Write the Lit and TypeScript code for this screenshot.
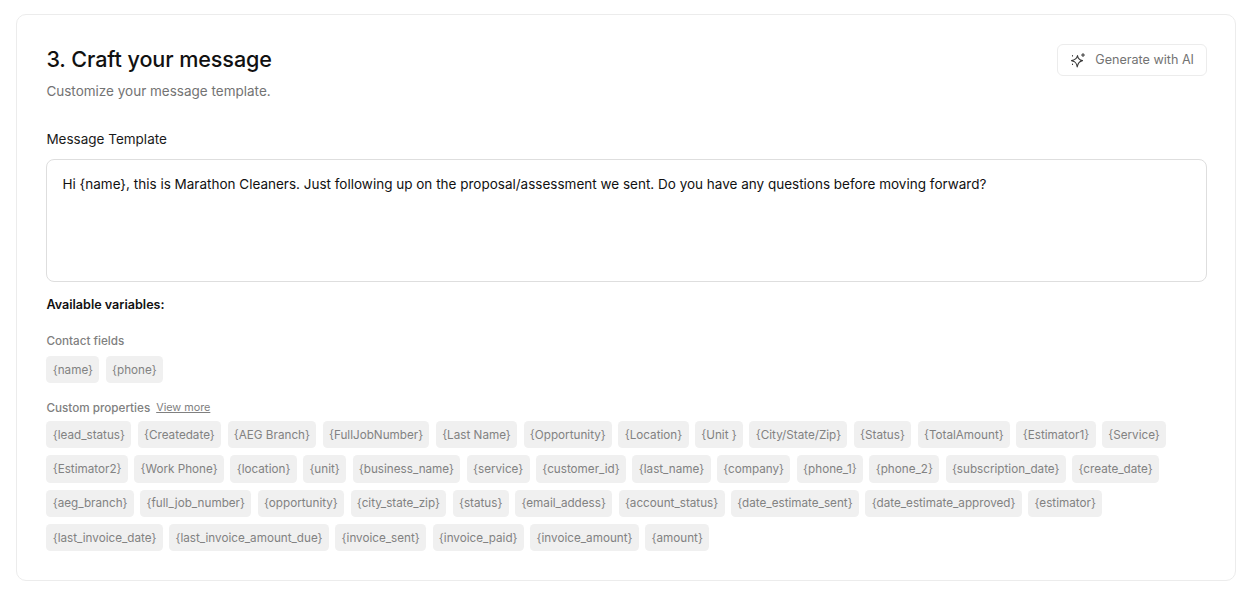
import { LitElement, html, css } from 'lit';
import { customElement } from 'lit/decorators.js';

const CONTACT_FIELDS = ['{name}', '{phone}'];

const CUSTOM_PROPERTIES = [
  '{lead_status}', '{Createdate}', '{AEG Branch}', '{FullJobNumber}', '{Last Name}', '{Opportunity}',
  '{Location}', '{Unit }', '{City/State/Zip}', '{Status}', '{TotalAmount}', '{Estimator1}', '{Service}',
  '{Estimator2}', '{Work Phone}', '{location}', '{unit}', '{business_name}', '{service}', '{customer_id}',
  '{last_name}', '{company}', '{phone_1}', '{phone_2}', '{subscription_date}', '{create_date}',
  '{aeg_branch}', '{full_job_number}', '{opportunity}', '{city_state_zip}', '{status}', '{email_addess}',
  '{account_status}', '{date_estimate_sent}', '{date_estimate_approved}', '{estimator}',
  '{last_invoice_date}', '{last_invoice_amount_due}', '{invoice_sent}', '{invoice_paid}',
  '{invoice_amount}', '{amount}',
];

const MESSAGE =
  'Hi {name}, this is Marathon Cleaners. Just following up on the proposal/assessment we sent. Do you have any questions before moving forward?';

@customElement('app-root')
export class AppRoot extends LitElement {
  static styles = css`
    :host {
      display: block;
      padding: 14px 16px;
      background: #fff;
      font-family: Inter, 'Liberation Sans', sans-serif;
      color: #111;
    }

    .card {
      border: 1px solid #ececec;
      border-radius: 10px;
      padding: 29px 28px 27px 29.4px;
      box-sizing: border-box;
      height: 567px;
    }

    .head {
      display: flex;
      justify-content: space-between;
      align-items: flex-start;
    }

    h2 {
      margin: 0;
      font-size: 21.6px;
      line-height: 30px;
      font-weight: 500;
      letter-spacing: -0.1px;
      color: #111;
    }

    .sub {
      margin: 7px 0 0;
      font-size: 13.5px;
      line-height: 20px;
      color: #737373;
    }

    .ai-btn {
      display: flex;
      align-items: center;
      gap: 9px;
      height: 32px;
      padding: 0 12px 1px;
      box-sizing: border-box;
      border: 1px solid #ececec;
      border-radius: 6px;
      background: #fff;
      color: #737373;
      font: inherit;
      font-size: 12.6px;
    }

    .label {
      margin-top: 28px;
      font-size: 13.5px;
      line-height: 20px;
      color: #1a1a1a;
    }

    .template {
      margin-top: 10px;
      height: 123px;
      box-sizing: border-box;
      border: 1px solid #dedede;
      border-radius: 8px;
      padding: 14px 15px;
      font-size: 13.5px;
      line-height: 20px;
      color: #111;
    }

    .vars-title {
      margin-top: 14px;
      font-size: 12.6px;
      line-height: 18px;
      font-weight: 600;
      color: #111;
    }

    .group-title {
      display: flex;
      align-items: center;
      gap: 6px;
      font-size: 11.7px;
      line-height: 16px;
      font-weight: 500;
      color: #808080;
    }

    .contact { margin-top: 19px; }
    .custom { margin-top: 16.3px; }

    .view-more {
      font-size: 10.8px;
      font-weight: 400;
      color: #808080;
      text-decoration: underline;
    }

    .chips {
      display: flex;
      flex-wrap: wrap;
      gap: 7px 6.4px;
      margin-top: 7px;
    }

    .custom + .chips { margin-top: 5.4px; }

    .chip {
      display: flex;
      align-items: center;
      height: 27.3px;
      padding: 0 6.3px;
      border-radius: 4.5px;
      background: #f0f0f0;
      color: #828282;
      font-size: 11.7px;
      white-space: pre;
    }
  `;

  private chips(items: string[]) {
    return html`<div class="chips">${items.map((v) => html`<span class="chip">${v}</span>`)}</div>`;
  }

  render() {
    return html`
      <div class="card">
        <div class="head">
          <div>
            <h2>3. Craft your message</h2>
            <p class="sub">Customize your message template.</p>
          </div>
          <button class="ai-btn">
            <svg width="16" height="16" viewBox="0 0 16 16" fill="none" stroke="#3a3a3a" stroke-width="1.1" stroke-linecap="round" stroke-linejoin="round">
              <path d="M7.500 3.500C7.900 6.600 9.300 8 12.500 8.600 9.300 9.200 7.900 10.700 7.200 15 6.600 10.700 5.300 9.300 1.500 8.600 5.300 8 6.900 6.600 7.500 3.500Z" />
              <path d="M13 1.500v3M11.500 3h3" />
              <path d="M2.500 3.500v.5M2.500 12v.5" />
            </svg>
            Generate with AI
          </button>
        </div>
        <div class="label">Message Template</div>
        <div class="template">${MESSAGE}</div>
        <div class="vars-title">Available variables:</div>
        <div class="group-title contact">Contact fields</div>
        ${this.chips(CONTACT_FIELDS)}
        <div class="group-title custom">Custom properties <a class="view-more">View more</a></div>
        ${this.chips(CUSTOM_PROPERTIES)}
      </div>
    `;
  }
}
